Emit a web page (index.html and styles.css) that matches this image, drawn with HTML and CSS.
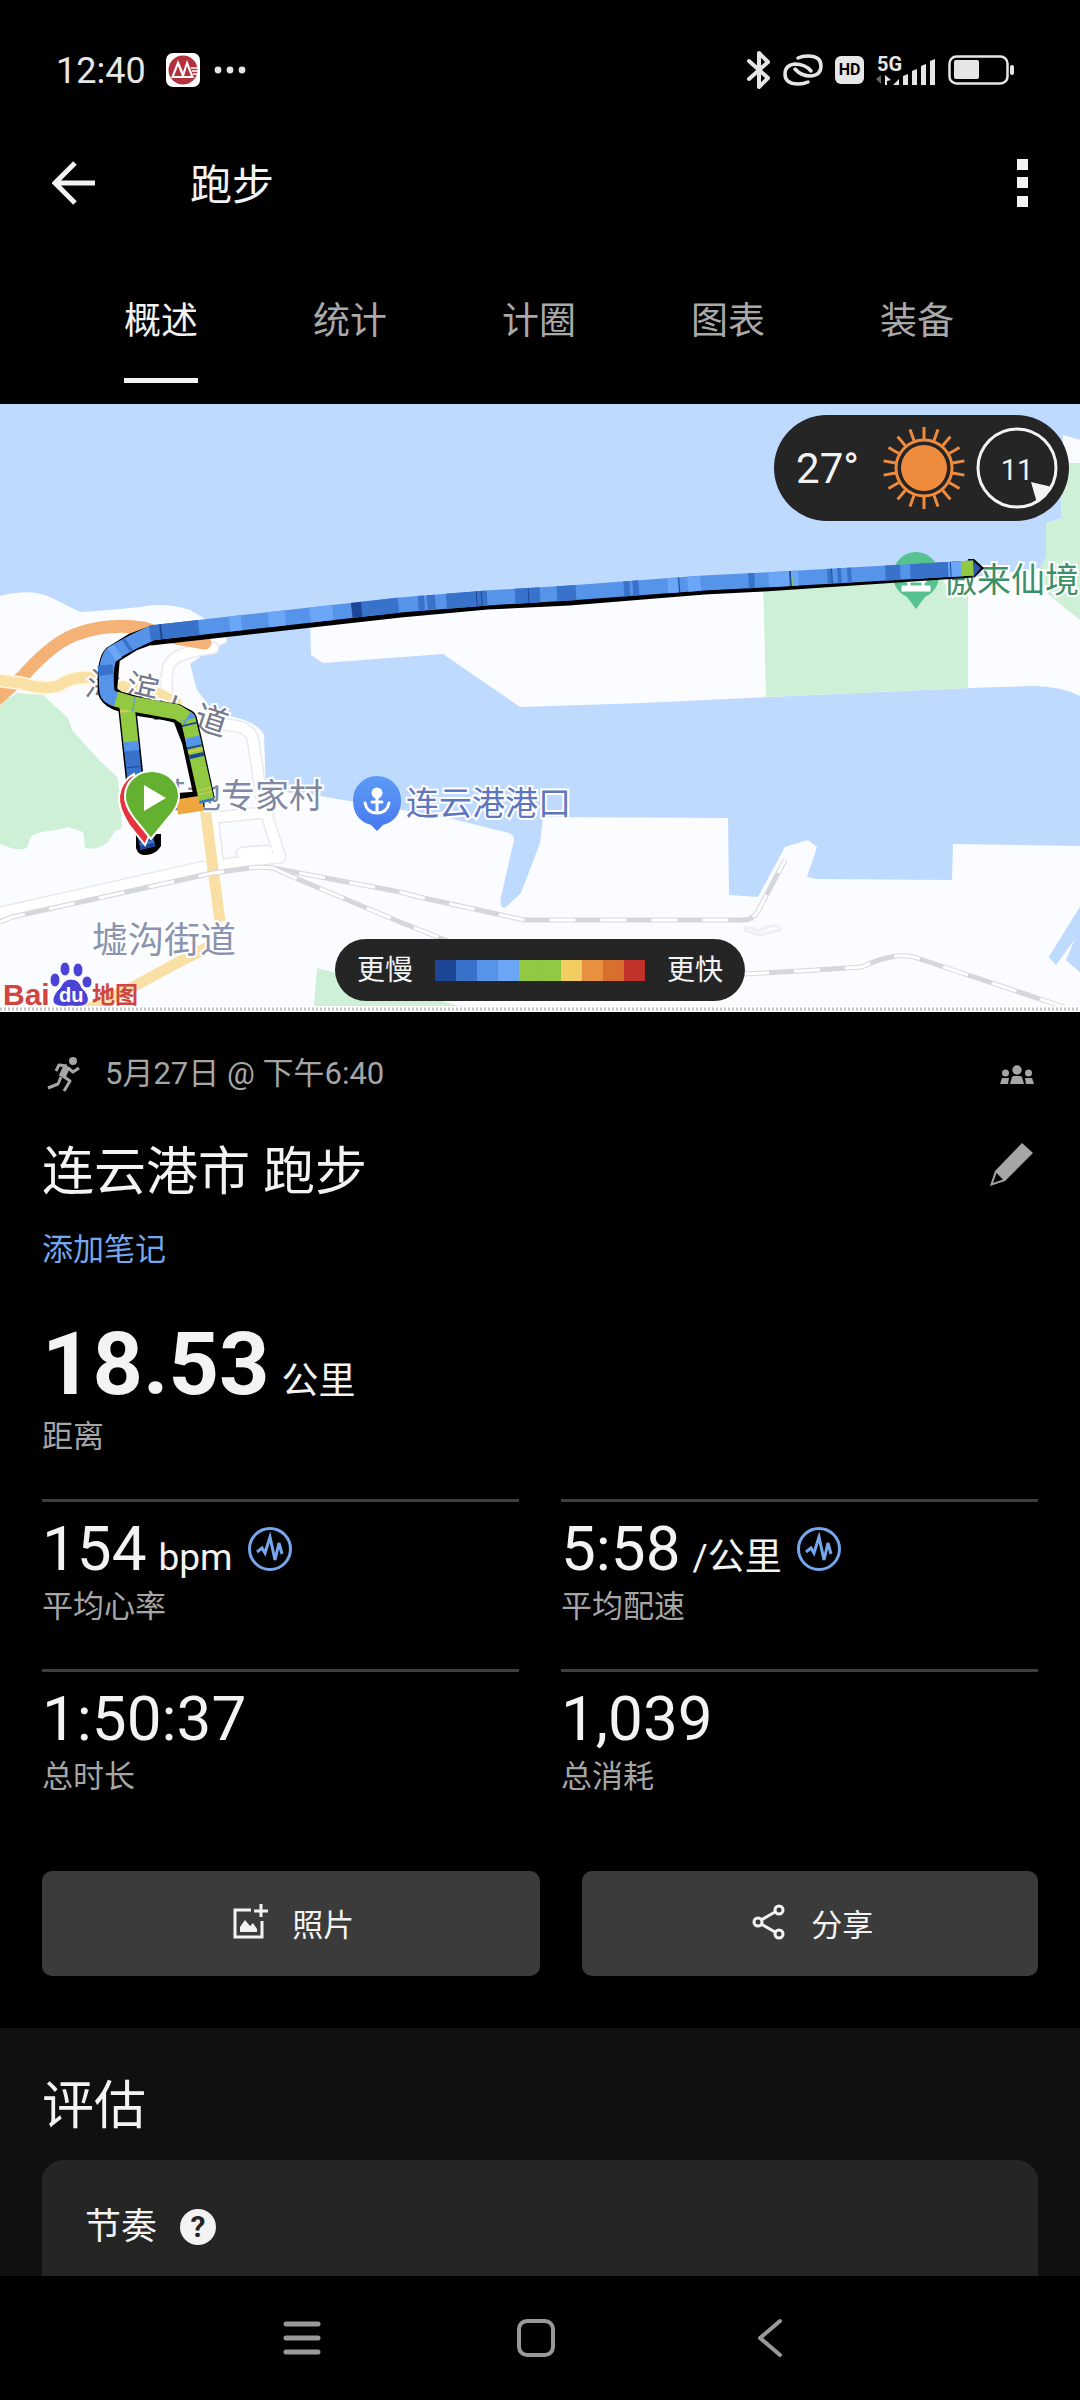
FILE: index.html
```html
<!DOCTYPE html>
<html lang="zh-CN">
<head>
    <meta charset="UTF-8">
    <meta name="viewport" content="width=device-width, initial-scale=1.0">
    <title>跑步</title>
    <link rel="stylesheet" href="styles.css">
</head>
<body>
    <!-- Status bar -->
    <div class="status-bar">
        <span class="clock">12:40</span>
        <svg class="bank-icon" width="34" height="34" viewBox="0 0 34 34">
            <rect width="34" height="34" rx="7" fill="#fff"/>
            <circle cx="17" cy="17" r="14.5" fill="#b3313c"/>
            <path d="M5 25 L12 7 L17 19 L21 7 L28 25 Z" fill="#fff"/>
            <path d="M8 23 L12 13 L16 23 Z M18 23 L21 13 L25 23 Z" fill="#b3313c"/>
            <path d="M25 15 H32 M26 18 H32 M27 21 H31" stroke="#fff" stroke-width="1.5"/>
        </svg>
        <svg width="34" height="8" viewBox="0 0 34 8" fill="#e6e6e6">
            <circle cx="5" cy="4" r="3.4"/><circle cx="17" cy="4" r="3.4"/><circle cx="29" cy="4" r="3.4"/>
        </svg>
        <div class="status-right">
            <svg width="24" height="38" viewBox="0 0 24 38" fill="none" stroke="#e6e6e6" stroke-width="4" stroke-linecap="round" stroke-linejoin="round">
                <path d="M2 10 L21 27 L12 36 V2 L21 11 L2 28"/>
            </svg>
            <svg width="40" height="32" viewBox="0 0 40 32" fill="none" stroke="#e6e6e6" stroke-width="3.5" stroke-linecap="round">
                <path d="M15 4 Q19 2 25 2 Q38 2 38 12 Q38 21 28 22 Q18 22 12 15"/>
                <path d="M25 28 Q21 30 15 30 Q2 30 2 20 Q2 11 12 10 Q22 10 28 17"/>
            </svg>
            <span class="hd">HD</span>
            <svg width="60" height="34" viewBox="0 0 60 34" fill="#e6e6e6">
                <text class="net-text" x="1" y="18">5G</text>
                <path d="M5 22 V31 L0 26 Z" fill="#666"/>
                <path d="M9 32 V22 L15 27 L11 28 V32 Z"/>
                <path d="M17 32 L23 26 V32 Z M27 32 V23 L32 21 V32 Z M36 32 V18 L41 16 V32 Z M45 32 V13 L50 11 V32 Z M54 32 V8 L59 6 V32 Z"/>
            </svg>
            <svg width="66" height="30" viewBox="0 0 66 30">
                <rect x="1.5" y="1.5" width="58" height="27" rx="7" fill="none" stroke="#e6e6e6" stroke-width="2.5"/>
                <rect x="6" y="5" width="25" height="19" rx="2" fill="#e6e6e6"/>
                <rect x="62" y="10" width="4" height="10" rx="2" fill="#e6e6e6"/>
            </svg>
        </div>
    </div>

    <header class="app-bar">
        <button class="icon-btn" type="button" aria-label="返回">
            <svg width="44" height="44" viewBox="0 0 44 44" fill="none" stroke="#f3f3f3" stroke-width="5">
                <path d="M43 22 H4 M23 2 L3 22 L23 42"/>
            </svg>
        </button>
        <h1>跑步</h1>
        <button class="icon-btn menu-btn" type="button" aria-label="更多">
            <svg width="11" height="48" viewBox="0 0 11 48" fill="#f3f3f3">
                <rect width="11" height="11"/><rect y="18" width="11" height="11"/><rect y="37" width="11" height="11"/>
            </svg>
        </button>
    </header>

    <nav class="tabs">
        <button class="tab active" type="button">概述</button>
        <button class="tab" type="button">统计</button>
        <button class="tab" type="button">计圈</button>
        <button class="tab" type="button">图表</button>
        <button class="tab" type="button">装备</button>
    </nav>

    <main>
        <!-- Route map -->
        <section class="map">
            <svg class="map-canvas" viewBox="0 404 1080 608">
                <defs>
                    <path id="leg-coast" d="M150 633 L400 605 L487 598 L569 593 L704 583 L764 580 L974 568"/>
                    <path id="leg-east" d="M116 699 L133 704 L177 712 L188 719 L193 740 L207 802"/>
                    <path id="leg-west" d="M127 706 L137 800 L148 848"/>
                    <path id="rail" d="M0 922 L12 917 L213 873 L257 867 L273 868 L400 892 L419 897 L524 920 H743 Q753 920 758 911 L785 860 M273 868 L300 880 L400 922 L470 950 M743 974 L800 971 L862 967 Q880 958 897 956 Q910 955 920 959 L1064 1007"/>
                    <linearGradient id="anchor-fill" x1="0" y1="0" x2="0" y2="1">
                        <stop offset="0" stop-color="#5a9cf5"/><stop offset="1" stop-color="#4a78f0"/>
                    </linearGradient>
                </defs>
                <rect y="404" width="1080" height="608" fill="#bfdaff"/>

                <!-- Land -->
                <g fill="#fbfcff">
                    <path d="M0 596 Q30 588 50 597 L80 612 L110 610 L140 607 Q165 602 190 610 L205 619 L226 636 L227 642 L210 650 L190 664 L197 690 L215 714 L230 716 Q258 722 264 735 L266 790 L320 796 L449 818 L509 833 Q514 835 514 840 L501 897 Q499 910 506 907 L521 893 L540 843 L543 817 L728 818 L729 895 L758 897 L785 847 L808 840 L817 847 L807 877 L817 879 L952 880 L953 844 L1080 846 V907 L1049 957 L1056 965 L1075 939 L1066 960 L1080 972 V1012 H0 Z"/>
                    <path d="M310 620 L311 655 L323 663 L443 654 L520 707 L643 703 L769 697 L968 688 L1033 686 Q1060 686 1080 696 V440 L1063 435 L1061 500 L1062 518 L1046 523 V557 L1040 568 L968 578 L500 603 Z"/>
                </g>
                <path d="M1080 907 L1049 957 L1056 965 L1073 939 L1076 941 L1066 960 L1080 972 Z" fill="#bfdaff"/>
                <g fill="#cdf0d7">
                    <path d="M763 580 L766 697 L968 688 V570 Z"/>
                    <path d="M1066 463 H1080 V620 L1048 594 L1040 568 L1046 557 V523 L1062 518 L1061 500 Z"/>
                    <path d="M0 703 L17 693 L43 695 L68 718 L72 730 L97 758 L118 778 L122 828 L115 831 L108 842 Q96 851 85 848 L83 832 L68 827 L57 830 L42 832 Q30 834 29 842 L27 848 Q18 852 0 844 Z"/>
                    <path d="M317 968 L314 1006 H459 L420 994 Z"/>
                </g>

                <!-- Roads -->
                <g fill="none" stroke-linecap="round" stroke-linejoin="round">
                    <path d="M0 913 L203 867 M213 648 Q180 652 172 661 Q165 668 167 690 M207 722 L236 726 Q250 728 253 740 L262 800 L280 857 L213 866 M211 818 L268 812 M213 822 L218 865 M242 853 L267 851" stroke="#e8e8ee" stroke-width="13"/>
                    <path d="M0 913 L203 867 M213 648 Q180 652 172 661 Q165 668 167 690 M207 722 L236 726 Q250 728 253 740 L262 800 L280 857 L213 866 M211 818 L268 812 M213 822 L218 865 M242 853 L267 851" stroke="#fff" stroke-width="10"/>
                    <path d="M744 928 Q752 926 758 931 L770 926 Q780 924 780 930 L760 935 L746 931 Z" stroke="#f0f0f4" stroke-width="3"/>
                    <path d="M-4 700 L23 676 Q55 640 80 633 Q110 623 143 628 L176 638 L205 643" stroke="#f5b277" stroke-width="13"/>
                    <path d="M-4 680 L20 683 Q43 690 58 686 Q75 675 93 678 L113 685 L157 693 L176 703" stroke="#fff6dd" stroke-width="14"/>
                    <path d="M-4 680 L20 683 Q43 690 58 686 Q75 675 93 678 L113 685 L157 693 L176 703" stroke="#f9e0a5" stroke-width="11"/>
                    <path d="M205 808 L220 922" stroke="#f9dfa4" stroke-width="11" stroke-linecap="butt"/>
                    <path d="M212 945 L173 965 L133 987 L90 1008" stroke="#f9e0a5" stroke-width="11"/>
                </g>
                <g fill="none">
                    <use href="#rail" stroke="#d6d7dc" stroke-width="5"/>
                    <use href="#rail" stroke="#fff" stroke-width="3" stroke-dasharray="26 25"/>
                </g>

                <!-- Place names -->
                <g class="place road">
                    <text x="87" y="698" transform="rotate(12 102 682)">海</text>
                    <text x="126" y="700" transform="rotate(14 142 688)">滨</text>
                    <text x="155" y="722" transform="rotate(18 170 710)">大</text>
                    <text x="195" y="732" transform="rotate(18 211 720)">道</text>
                </g>
                <text class="place village" x="153" y="808">基地专家村</text>
                <text class="place town" x="92" y="953">墟沟街道</text>
                <text class="place port" x="406" y="815">连云港港口</text>
                <text class="place scenic" x="943" y="592">傲来仙境</text>

                <path d="M377 831 L371 825 Q353 820 353 800 A24 24 0 0 1 401 800 Q401 820 383 825 Z" fill="url(#anchor-fill)"/>
                <circle cx="377" cy="793" r="5.5" fill="#fff"/>
                <path d="M377 795 V813 M372 802 H382 M365 803 Q367 813 377 813 Q387 813 389 803" fill="none" stroke="#fff" stroke-width="3" stroke-linecap="round"/>
                <path d="M916 609 L907 597 Q893 590 893 575 A23 23 0 0 1 939 575 Q939 590 925 597 Z" fill="#58c190"/>
                <path d="M903 590 H929 V587 H903 Z M907 578 H925 V581 H907 Z M909 580 V588 M923 580 V588" fill="#fff" stroke="#fff" stroke-width="3"/>

                <!-- Route -->
                <g fill="none" stroke="#000" stroke-linejoin="round">
                    <path d="M152 635 L133 642 L112 655 Q105 662 107 692 Q108 697 116 701 L133 706 L177 713 L188 719 L193 740 L206 800" stroke-width="18"/>
                    <path d="M150 637 L400 609 L487 601 L569 597 L704 586 L764 583 L972 569" stroke-width="17"/>
                    <path d="M112 657 L109 692 L118 699 L180 716 L190 742 L202 797" stroke-width="16"/>
                    <path d="M204 799 L178 801" stroke-width="16"/>
                    <use href="#leg-west" stroke-width="18"/>
                </g>
                <path d="M136 834 V848 Q138 855 144 855 Q153 855 158 850 L161 846 V834 Z" fill="#000"/>
                <path d="M968 559 L974 559 L984 568 L974 578 Z" fill="#000"/>
                <g class="route">
                    <path class="pace-3" d="M152 633 L133 642 L113 653 Q104 660 107 692 Q108 697 118 700"/>
                    <path class="pace-2" d="M105 665 L106 675 M126 646 L129 644"/>
                    <path class="pace-4" d="M112 655 L118 651"/>
                    <use href="#leg-coast" class="pace-3"/>
                    <use href="#leg-coast" class="pace-2" stroke-dasharray="49 163 38 20 6 3 8 11 41 28 25 17 19 48 6 3 6 110 6 73 4 6 4 6 4 34 15 10 57 200"/>
                    <use href="#leg-coast" class="pace-4" stroke-dasharray="0 80 12 27 17 25 23 336 10 10 13 68 30 150 14 200"/>
                    <use href="#leg-coast" class="pace-1" stroke-dasharray="0 10 2 191 10 115 1 4 1 46 1 150 1 110 2 40 1 118 1 145 2 200"/>
                    <use href="#leg-coast" class="pace-5" stroke-dasharray="0 644 1 169 12 100"/>
                    <use href="#leg-west" class="pace-2"/>
                    <use href="#leg-west" class="pace-3" stroke-dasharray="0 36 9 200"/>
                    <use href="#leg-west" class="pace-1" stroke-dasharray="0 61 1 63 12 3 10 10"/>
                    <use href="#leg-west" class="pace-5" stroke-dasharray="36 200"/>
                    <use href="#leg-west" class="pace-6" stroke-dasharray="0 3 3 200"/>
                    <path class="pace-7" d="M177 807 L203 803"/>
                    <use href="#leg-east" class="pace-5"/>
                    <use href="#leg-east" class="pace-3" stroke-dasharray="0 18 1 55 2 18 9 200"/>
                    <use href="#leg-east" class="pace-1" stroke-dasharray="0 80 2 21 2 6 4 200"/>
                    <use href="#leg-east" class="pace-2" stroke-dasharray="0 158 20 20"/>
                    <use href="#leg-east" class="pace-6" stroke-dasharray="0 107 2 38 1 3 1 200"/>
                </g>
                <path d="M973 561 L981 568 L974 576 Z" fill="#2a5aa8"/>

                <path d="M145 845 L129 825 Q118 808 119 796 Q121 781 134 774 L149 836 Z" fill="#e5343d" stroke="#fff" stroke-width="2"/>
                <path d="M151 839 L134 818 Q124 804 125 795 A27 25 0 0 1 179 797 Q178 807 169 817 Z" fill="#64b031" stroke="#fff" stroke-width="2"/>
                <path d="M144 785 V811 L166 798 Z" fill="#fff"/>

                <!-- Provider logo -->
                <text class="logo-bai" x="3" y="1005">Bai</text>
                <g fill="#4a43d6" stroke="#fff" stroke-width="1">
                    <ellipse cx="55" cy="980" rx="5" ry="7"/><ellipse cx="65" cy="969" rx="5" ry="7"/>
                    <ellipse cx="78" cy="970" rx="5" ry="7"/><ellipse cx="87" cy="982" rx="5" ry="6"/>
                    <path d="M71 979 Q79 979 82 988 Q90 995 88 1002 Q85 1008 71 1006 Q56 1008 53 1002 Q52 995 60 988 Q64 979 71 979 Z"/>
                </g>
                <text class="logo-du" x="59" y="1002">du</text>
                <text class="logo-map" x="92" y="1003">地图</text>
                <path d="M0 1009 H1080" stroke="#fff" stroke-width="6"/>
                <path d="M0 1009 H1080" stroke="#c4c4c4" stroke-width="3" stroke-dasharray="2 2"/>
            </svg>

            <div class="weather">
                <span class="temp">27°</span>
                <svg width="84" height="84" viewBox="-42 -42 84 84" stroke="#ef8b3c" stroke-width="3">
                    <circle r="23" fill="#ef8b3c" stroke="none"/>
                    <circle r="28" fill="none"/>
                    <path d="M0 -29 V-41 M0 29 V41"/>
                    <path d="M0 -29 V-41 M0 29 V41" transform="rotate(20)"/>
                    <path d="M0 -29 V-41 M0 29 V41" transform="rotate(40)"/>
                    <path d="M0 -29 V-41 M0 29 V41" transform="rotate(60)"/>
                    <path d="M0 -29 V-41 M0 29 V41" transform="rotate(80)"/>
                    <path d="M0 -29 V-41 M0 29 V41" transform="rotate(100)"/>
                    <path d="M0 -29 V-41 M0 29 V41" transform="rotate(120)"/>
                    <path d="M0 -29 V-41 M0 29 V41" transform="rotate(140)"/>
                    <path d="M0 -29 V-41 M0 29 V41" transform="rotate(160)"/>
                </svg>
                <svg width="84" height="84" viewBox="-42 -42 84 84">
                    <circle r="39" fill="none" stroke="#f3f3f3" stroke-width="3"/>
                    <path d="M14 14 L35 19 L20 35 Z" fill="#f3f3f3"/>
                    <text class="wind" y="12" text-anchor="middle">11</text>
                </svg>
            </div>

            <div class="legend">
                <span>更慢</span>
                <div class="swatches">
                    <i class="sw-1"></i><i class="sw-2"></i><i class="sw-3"></i><i class="sw-4"></i><i class="sw-5"></i><i class="sw-5"></i><i class="sw-6"></i><i class="sw-7"></i><i class="sw-8"></i><i class="sw-9"></i>
                </div>
                <span>更快</span>
            </div>
        </section>

        <!-- Activity summary -->
        <section class="summary">
            <div class="meta">
                <svg width="44" height="36" viewBox="-5 0 44 36" fill="none" stroke="#a6a6a6" stroke-width="3" stroke-linejoin="round">
                    <circle cx="26" cy="4" r="4" fill="#a6a6a6" stroke="none"/>
                    <path d="M9 14 L12 8 L20 9 M21 11 L26 15 L32 11"/>
                    <path d="M20 9 L15 20" stroke-width="7"/>
                    <path d="M16 19 L23 24 L17 34 M14 20 L11 27 L1 31"/>
                </svg>
                <span class="date">5月27日 @ 下午6:40</span>
                <svg class="group-icon" width="34" height="20" viewBox="0 0 34 20" fill="#a6a6a6">
                    <circle cx="17" cy="5" r="4.7"/><circle cx="5.5" cy="8" r="3.5"/><circle cx="28.5" cy="8" r="3.5"/>
                    <path d="M10 19 L12 12 Q13 11 14 11 H20 Q21 11 22 12 L24 19 Z M0 19 L2 13 H9 L8 19 Z M34 19 L32 13 H25 L26 19 Z"/>
                </svg>
            </div>
            <div class="title-row">
                <h2>连云港市 跑步</h2>
                <button class="icon-btn" type="button" aria-label="编辑">
                    <svg width="50" height="50" viewBox="0 0 50 50" fill="#a6a6a6">
                        <path d="M34 2 L45 12 L17 40 L2 45 L7 30 Z M8.500 32 L5 42 L15 38.500 Z" fill-rule="evenodd"/>
                    </svg>
                </button>
            </div>
            <a class="note-link" href="#">添加笔记</a>

            <div class="distance"><strong>18.53</strong> <span class="unit">公里</span></div>
            <div class="label">距离</div>

            <div class="stats">
                <div class="stat">
                    <div class="value">154 <span class="unit">bpm</span>
                        <svg class="trend" width="46" height="46" viewBox="-23 -23 46 46"><circle r="20.500"/><path d="M-13 3 L-8 -1 L-5 4 L0 -12 L5 11 L9 -6 L12 5"/></svg>
                    </div>
                    <div class="label">平均心率</div>
                </div>
                <div class="stat">
                    <div class="value">5:58 <span class="unit">/公里</span>
                        <svg class="trend" width="46" height="46" viewBox="-23 -23 46 46"><circle r="20.500"/><path d="M-13 3 L-8 -1 L-5 4 L0 -12 L5 11 L9 -6 L12 5"/></svg>
                    </div>
                    <div class="label">平均配速</div>
                </div>
                <div class="stat">
                    <div class="value">1:50:37</div>
                    <div class="label">总时长</div>
                </div>
                <div class="stat">
                    <div class="value">1,039</div>
                    <div class="label">总消耗</div>
                </div>
            </div>

            <div class="actions">
                <button class="btn btn-photo" type="button">
                    <svg width="38" height="38" viewBox="0 0 38 38" fill="none" stroke="#f3f3f3" stroke-width="3">
                        <path d="M20 7 H4 V34 H31 V18 M30 1 V14 M23 8 H37"/>
                        <path d="M9 29 V24 L14 17 L19 23 L22 20 L26 26 V29 Z" fill="#f3f3f3" stroke="none"/>
                    </svg>
                    照片
                </button>
                <button class="btn btn-share" type="button">
                    <svg width="38" height="38" viewBox="0 0 38 38" fill="none" stroke="#f3f3f3" stroke-width="3">
                        <circle cx="29" cy="7" r="4"/><circle cx="8" cy="19" r="4"/><circle cx="29" cy="31" r="4"/>
                        <path d="M11 17 L25 9 M11 21 L25 29"/>
                    </svg>
                    分享
                </button>
            </div>
        </section>

        <!-- Evaluation -->
        <section class="evaluation">
            <h2>评估</h2>
            <div class="card">
                <h3>节奏</h3>
                <button class="help" type="button" aria-label="帮助">?</button>
            </div>
        </section>
    </main>

    <!-- System navigation -->
    <nav class="system-nav">
        <button class="icon-btn" type="button" aria-label="最近任务">
            <svg width="40" height="40" viewBox="0 0 40 40" stroke="#999" stroke-width="5" stroke-linecap="round">
                <path d="M4 6 H36 M4 20 H36 M4 34 H36"/>
            </svg>
        </button>
        <button class="icon-btn" type="button" aria-label="主屏幕">
            <svg width="40" height="40" viewBox="0 0 40 40" fill="none" stroke="#999" stroke-width="4">
                <rect x="3" y="3" width="34" height="34" rx="8"/>
            </svg>
        </button>
        <button class="icon-btn" type="button" aria-label="返回">
            <svg width="40" height="40" viewBox="0 0 40 40" fill="none" stroke="#999" stroke-width="4" stroke-linecap="round" stroke-linejoin="round">
                <path d="M30 3 L10 20 L30 37"/>
            </svg>
        </button>
    </nav>
</body>
</html>
```
FILE: styles.css
```css
:root {
    --text: #f3f3f3;
    --muted: #a6a6a6;
    --link: #76a7ec;
    --pill: #252525;
    --line: #3e3e3e;
}

* {
    margin: 0;
    padding: 0;
    box-sizing: border-box;
}

body {
    background: #000;
    color: var(--text);
    font-family: Roboto, "Noto Sans CJK SC", sans-serif;
    font-size: 31px;
    min-height: 100vh;
    display: flex;
    flex-direction: column;
}

button {
    font: inherit;
    color: inherit;
    background: none;
    border: none;
    cursor: pointer;
}

h1, h2, h3 {
    font-weight: 400;
}

svg {
    display: block;
}

.icon-btn {
    display: flex;
}

/* Status bar */
.status-bar {
    height: 140px;
    padding: 0 66px 0 56px;
    display: flex;
    align-items: center;
    color: #e6e6e6;
}

.clock {
    font-size: 36px;
    line-height: 44px;
    padding-top: 2px;
}

.bank-icon {
    margin: 0 13px 0 20px;
}

.status-right {
    margin-left: auto;
    display: flex;
    align-items: center;
    gap: 12px;
}

.hd {
    width: 29px;
    height: 28px;
    border-radius: 6px;
    background: #e6e6e6;
    color: #000;
    font-size: 16px;
    font-weight: 700;
    line-height: 28px;
    text-align: center;
}

.net-text {
    font-size: 20px;
    font-weight: 700;
}

/* App bar */
.app-bar {
    height: 86px;
    padding: 0 52px;
    display: flex;
    align-items: center;
}

.app-bar h1 {
    margin-left: 94px;
    padding-top: 5px;
    font-size: 42px;
    line-height: 60px;
}

.menu-btn {
    margin-left: auto;
}

/* Tabs */
.tabs {
    height: 178px;
    padding: 0 2px 21px 0;
    display: flex;
    justify-content: center;
    align-items: flex-end;
    gap: 115px;
}

.tab {
    padding-bottom: 34px;
    border-bottom: 5px solid transparent;
    font-size: 37px;
    line-height: 44px;
    color: #a9a9a9;
}

.tab.active {
    color: var(--text);
    border-bottom-color: var(--text);
}

/* Map */
.map {
    position: relative;
}

.map-canvas {
    width: 100%;
    height: auto;
}

.place {
    font-size: 33px;
    fill: #8088a3;
    stroke: #fff;
    stroke-width: 4px;
    paint-order: stroke;
}

.place.road {
    fill: #757b8d;
}

.place.village {
    font-size: 34px;
}

.place.town {
    font-size: 36px;
    fill: #8a94ae;
}

.place.port {
    fill: #5d76bd;
}

.place.scenic {
    font-size: 34px;
    fill: #3c9068;
}

.route {
    fill: none;
    stroke-width: 15px;
    stroke-linejoin: round;
}

.pace-1 { stroke: #1d4796; }
.pace-2 { stroke: #3872cb; }
.pace-3 { stroke: #5694ea; }
.pace-4 { stroke: #6ba6f7; }
.pace-5 { stroke: #91c943; }
.pace-6 { stroke: #d2cc50; }
.pace-7 { stroke: #efa63f; }

.logo-bai {
    font: 700 30px "Liberation Sans", sans-serif;
    fill: #d2443f;
}

.logo-du {
    font: 700 20px "Liberation Sans", sans-serif;
    fill: #fff;
}

.logo-map {
    font-size: 23px;
    font-weight: 700;
    fill: #d2443f;
}

.weather {
    position: absolute;
    top: 11px;
    right: 11px;
    height: 106px;
    padding: 0 10px 0 22px;
    border-radius: 53px;
    background: var(--pill);
    display: flex;
    align-items: center;
    gap: 9px;
}

.temp {
    font-size: 42px;
    line-height: 50px;
    padding-top: 2px;
    margin-right: 14px;
}

.wind {
    font-size: 29px;
    fill: var(--text);
}

.legend {
    position: absolute;
    bottom: 11px;
    left: 50%;
    transform: translateX(-50%);
    height: 62px;
    padding: 0 22px;
    border-radius: 31px;
    background: var(--pill);
    display: flex;
    align-items: center;
    gap: 22px;
    font-size: 28px;
    line-height: 40px;
    white-space: nowrap;
}

.legend span {
    padding-top: 2px;
}

.swatches {
    display: flex;
}

.swatches i {
    width: 21px;
    height: 21px;
}

.sw-1 { background: #1d4796; }
.sw-2 { background: #3872cb; }
.sw-3 { background: #5694ea; }
.sw-4 { background: #6ba6f7; }
.sw-5 { background: #91c943; }
.sw-6 { background: #f2cd62; }
.sw-7 { background: #e99040; }
.sw-8 { background: #d96f2e; }
.sw-9 { background: #c1322b; }

/* Summary */
.summary {
    padding: 41px 42px 52px;
}

.meta {
    height: 44px;
    display: flex;
    align-items: center;
    gap: 19px;
    color: var(--muted);
}

.date {
    line-height: 40px;
    padding-bottom: 2px;
}

.group-icon {
    margin-left: auto;
    margin-right: 4px;
}

.title-row {
    margin-top: 44px;
    display: flex;
    justify-content: space-between;
    align-items: flex-start;
}

.title-row h2,
.evaluation h2 {
    font-size: 52px;
    line-height: 64px;
}

.note-link {
    display: block;
    width: fit-content;
    margin-top: 25px;
    line-height: 40px;
    color: var(--link);
    text-decoration: none;
}

.distance {
    margin-top: 44px;
    font-size: 88px;
    line-height: 100px;
    display: flex;
    align-items: baseline;
    gap: 12px;
}

.distance strong {
    font-weight: 700;
}

.unit {
    font-size: 37px;
    line-height: 40px;
}

.label {
    line-height: 40px;
    margin-top: 3px;
    color: var(--muted);
}

.stats {
    margin-top: 42px;
    display: grid;
    grid-template-columns: 1fr 1fr;
    gap: 42px;
}

.stat {
    border-top: 3px solid var(--line);
    padding-top: 12px;
}

.value {
    display: flex;
    align-items: baseline;
    gap: 12px;
    height: 70px;
    font-size: 62px;
    line-height: 70px;
}

.trend {
    align-self: center;
    margin-left: 2px;
    fill: none;
    stroke: var(--link);
    stroke-width: 3px;
}

/* Buttons */
.actions {
    margin-top: 74px;
    display: flex;
    gap: 42px;
}

.btn {
    height: 105px;
    padding: 0 0 3px 4px;
    border-radius: 10px;
    background: #3b3b3b;
    display: flex;
    justify-content: center;
    align-items: center;
    gap: 23px;
}

.btn-photo {
    flex: 12;
}

.btn-share {
    flex: 11;
}

/* Evaluation */
.evaluation {
    flex: 1;
    padding: 47px 42px 0;
    background: #101010;
}

.card {
    margin-top: 21px;
    padding: 45px 43px 27px;
    border-radius: 21px 21px 0 0;
    background: var(--pill);
    display: flex;
    align-items: center;
    gap: 23px;
}

.card h3 {
    font-size: 36px;
    line-height: 44px;
}

.help {
    width: 36px;
    height: 36px;
    border-radius: 50%;
    background: var(--text);
    color: var(--pill);
    font-size: 30px;
    font-weight: 700;
    line-height: 36px;
    text-align: center;
}

/* System navigation */
.system-nav {
    height: 124px;
    padding-right: 8px;
    background: #000;
    display: flex;
    justify-content: center;
    align-items: center;
    gap: 194px;
}
```
